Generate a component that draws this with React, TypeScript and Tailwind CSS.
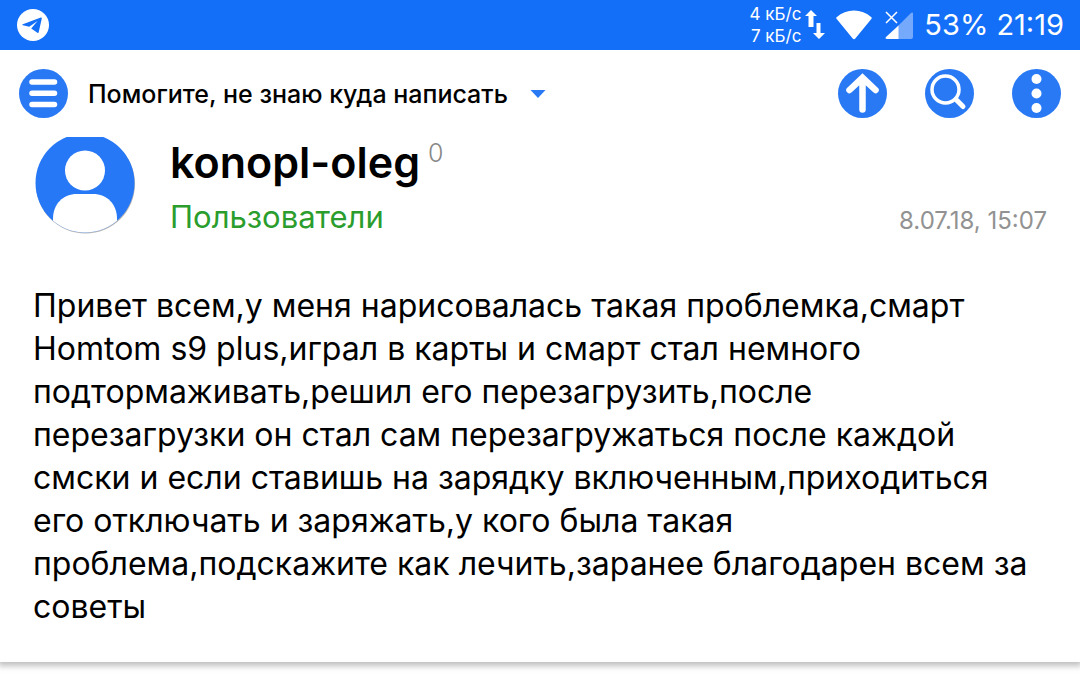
import type { ReactNode } from 'react';

interface Post {
  author: string;
  reputation: number;
  group: string;
  date: string;
  text: string;
}

const post: Post = {
  author: 'konopl-oleg',
  reputation: 0,
  group: 'Пользователи',
  date: '8.07.18, 15:07',
  text: `Привет всем,у меня нарисовалась такая проблемка,смарт
Homtom s9 plus,играл в карты и смарт стал немного
подтормаживать,решил его перезагрузить,после
перезагрузки он стал сам перезагружаться после каждой
смски и если ставишь на зарядку включенным,приходиться
его отключать и заряжать,у кого была такая
проблема,подскажите как лечить,заранее благодарен всем за
советы`,
};

function StatusBar() {
  return (
    <div className="flex h-[50px] items-center justify-between bg-[#146ff8] px-4 text-white">
      <svg className="h-[34px] w-[34px]" viewBox="0 0 34 34">
        <circle cx="17" cy="17" r="16" fill="#fff" />
        <path
          d="M6.800 16.300 24.800 9.500c.7-.2 1.100.1 1 .9L22.700 24.300c-.2.8-.7.9-1.300.5l-6.200-4.400 6.300-7.400-8.300 5.800-6.300-1.600c-.8-.2-.8-.6-.1-.9z"
          fill="#146ff8"
        />
      </svg>
      <div className="flex items-center">
        <div className="text-right text-[17px] leading-[22px]">
          <div>4 кБ/с</div>
          <div>7 кБ/с</div>
        </div>
        <svg className="ml-1 h-[30px] w-5" viewBox="0 0 20 30" fill="#fff">
          <path d="M6 0 12 6H8.500v11h-5V6H0zM14 29 8 23h3.500V13h4v10H20z" />
        </svg>
        <svg className="ml-[11px] h-[30px] w-9" viewBox="0 0 36 30" fill="#fff">
          <path d="M.6 7.200C5.500 2.700 11.500.4 18 .4s12.500 2.300 17.400 6.800c.5.500.5.900.1 1.500L19.300 28.400c-.8 1-1.800 1-2.600 0L.5 8.700C.1 8.100.1 7.700.6 7.200z" />
        </svg>
        <svg className="ml-[13px] h-[30px] w-7" viewBox="0 0 28 30">
          <path d="M13 16 26 3c1-1 2-.6 2 .8V27a2 2 0 0 1-2 2H13z" fill="#75a9fb" />
          <path d="M13.500 15.500V29H2c-1.500 0-1.900-1-1-2z" fill="#fff" />
          <path d="m1 2 11 11M12 2 1 13" stroke="#fff" strokeWidth="1.500" />
        </svg>
        <span className="ml-[11px] text-[29px] leading-8">53%</span>
        <span className="ml-2 text-[29px] leading-8">21:19</span>
      </div>
    </div>
  );
}

interface RoundButtonProps {
  label: string;
  children: ReactNode;
}

function RoundButton({ label, children }: RoundButtonProps) {
  return (
    <button type="button" aria-label={label} className="h-[49px] w-[49px] shrink-0 rounded-full bg-[#2979f5]">
      <svg className="h-full w-full" viewBox="0 0 49 49" fill="none" stroke="#fff" strokeLinecap="round">
        {children}
      </svg>
    </button>
  );
}

function Toolbar() {
  return (
    <header className="flex h-[87px] items-center px-[19px]">
      <RoundButton label="Меню">
        <path d="M13 13h22.500M13 24.300h22.500M13 35.500h22.500" strokeWidth="5.500" />
      </RoundButton>
      <button type="button" className="ml-5 flex items-center text-black">
        <h1 className="text-[25px] font-medium leading-8">Помогите, не знаю куда написать</h1>
        <svg className="ml-[22px] h-2 w-4" viewBox="0 0 16 8">
          <path d="M.5 0h15L8 8z" fill="#2979f5" />
        </svg>
      </button>
      <div className="ml-auto flex gap-[38px]">
        <RoundButton label="Наверх">
          <path d="M24.500 40.500V9M11.500 21 24.500 8.800 37.500 21" strokeWidth="6.500" />
        </RoundButton>
        <RoundButton label="Поиск">
          <circle cx="20.500" cy="20.500" r="13.500" strokeWidth="3.500" />
          <path d="m31.500 31 6.500 6.500" strokeWidth="5" />
        </RoundButton>
        <RoundButton label="Ещё">
          <g fill="#fff" stroke="none">
            <circle cx="24.500" cy="10" r="5" />
            <circle cx="24.500" cy="24.500" r="5" />
            <circle cx="24.500" cy="39" r="5" />
          </g>
        </RoundButton>
      </div>
    </header>
  );
}

function Avatar() {
  return (
    <svg className="h-[100px] w-[102px] shrink-0" viewBox="0 0 102 100">
      <defs>
        <clipPath id="avatar">
          <circle cx="51" cy="46" r="49.500" />
        </clipPath>
      </defs>
      <circle cx="51.500" cy="47" r="49.500" fill="#b4b4b4" />
      <g clipPath="url(#avatar)">
        <rect width="102" height="100" fill="#2678f6" />
        <circle cx="51" cy="33.500" r="20" fill="#fff" />
        <path d="M19 100V82c0-15 10-25 24-25h16c14 0 24 10 24 25v18z" fill="#fff" />
      </g>
    </svg>
  );
}

export default function App() {
  return (
    <div className="min-h-screen bg-white font-['Inter','Liberation_Sans',sans-serif]">
      <StatusBar />
      <Toolbar />
      <article className="pb-[34px] shadow-[0_2px_6px_2px_rgba(0,0,0,0.25)] [clip-path:inset(0_0_-20px_0)]">
        <div className="flex pl-[34px] pr-[33px]">
          <Avatar />
          <div className="ml-[34px]">
            <h2 className="flex items-start text-[43px] font-semibold leading-[50px] text-black">
              {post.author}
              <sup className="top-0 ml-2 pt-1 text-[25px] font-light leading-6 text-[#888]">{post.reputation}</sup>
            </h2>
            <p className="mt-3 text-[31px] leading-9 text-[#2a9d2d]">{post.group}</p>
          </div>
          <time className="ml-auto mt-[68px] text-[24px] leading-8 text-[#929292]">{post.date}</time>
        </div>
        <p className="mt-[47px] whitespace-pre-line px-[33px] text-[32px] leading-[43px] text-black">{post.text}</p>
      </article>
    </div>
  );
}
